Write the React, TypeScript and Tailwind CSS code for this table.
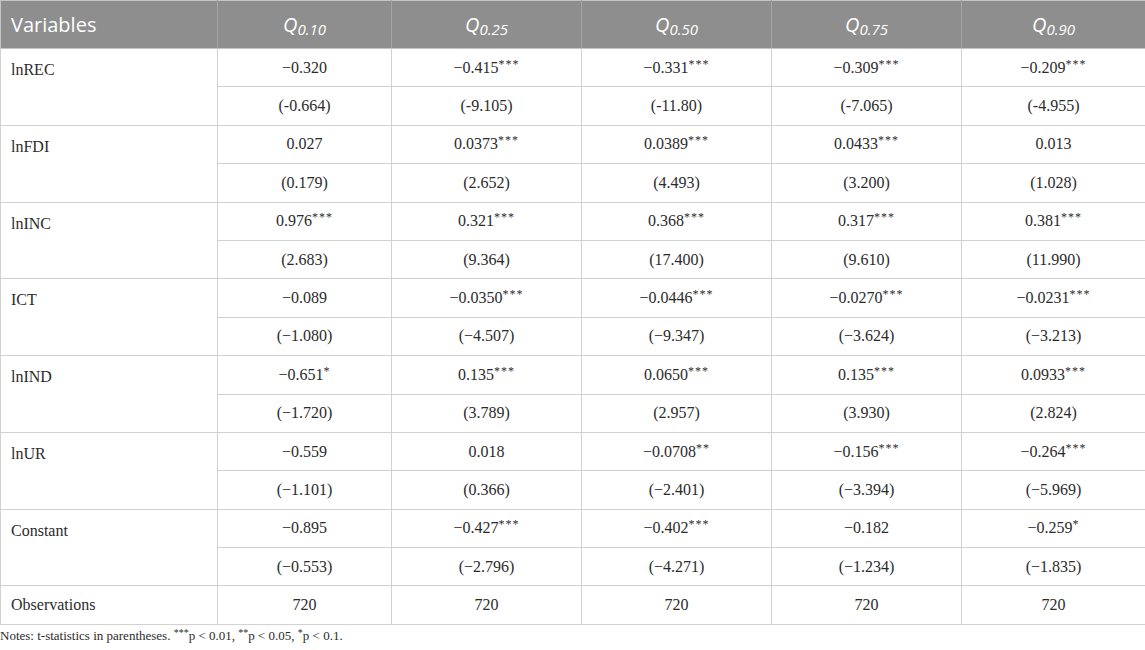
import React from 'react';

type Cell = { v: string; s?: string };

interface Row {
  name: string;
  coef: Cell[];
  tstat: string[];
}

const c = (v: string, s?: string): Cell => ({ v, s });

const rows: Row[] = [
  {
    name: 'lnREC',
    coef: [c('\u22120.320'), c('\u22120.415', '***'), c('\u22120.331', '***'), c('\u22120.309', '***'), c('\u22120.209', '***')],
    tstat: ['(-0.664)', '(-9.105)', '(-11.80)', '(-7.065)', '(-4.955)'],
  },
  {
    name: 'lnFDI',
    coef: [c('0.027'), c('0.0373', '***'), c('0.0389', '***'), c('0.0433', '***'), c('0.013')],
    tstat: ['(0.179)', '(2.652)', '(4.493)', '(3.200)', '(1.028)'],
  },
  {
    name: 'lnINC',
    coef: [c('0.976', '***'), c('0.321', '***'), c('0.368', '***'), c('0.317', '***'), c('0.381', '***')],
    tstat: ['(2.683)', '(9.364)', '(17.400)', '(9.610)', '(11.990)'],
  },
  {
    name: 'ICT',
    coef: [c('\u22120.089'), c('\u22120.0350', '***'), c('\u22120.0446', '***'), c('\u22120.0270', '***'), c('\u22120.0231', '***')],
    tstat: ['(\u22121.080)', '(\u22124.507)', '(\u22129.347)', '(\u22123.624)', '(\u22123.213)'],
  },
  {
    name: 'lnIND',
    coef: [c('\u22120.651', '*'), c('0.135', '***'), c('0.0650', '***'), c('0.135', '***'), c('0.0933', '***')],
    tstat: ['(\u22121.720)', '(3.789)', '(2.957)', '(3.930)', '(2.824)'],
  },
  {
    name: 'lnUR',
    coef: [c('\u22120.559'), c('0.018'), c('\u22120.0708', '**'), c('\u22120.156', '***'), c('\u22120.264', '***')],
    tstat: ['(\u22121.101)', '(0.366)', '(\u22122.401)', '(\u22123.394)', '(\u22125.969)'],
  },
  {
    name: 'Constant',
    coef: [c('\u22120.895'), c('\u22120.427', '***'), c('\u22120.402', '***'), c('\u22120.182'), c('\u22120.259', '*')],
    tstat: ['(\u22120.553)', '(\u22122.796)', '(\u22124.271)', '(\u22121.234)', '(\u22121.835)'],
  },
];

const quantiles = ['0.10', '0.25', '0.50', '0.75', '0.90'];

const serif = "font-['Liberation_Serif','Times_New_Roman',serif]";
const sans = "font-['Open_Sans','Noto_Sans',sans-serif]";

const td = 'border border-[#d2d2d2] h-[38.4px] p-0 align-middle text-center';

function Stars({ s, small }: { s: string; small?: boolean }) {
  return (
    <sup className={small ? 'text-[10px] relative -top-[4px]' : 'text-[12px] tracking-[1px] relative -top-[5px]'}>
      {s}
    </sup>
  );
}

export default function App() {
  return (
    <div className={`w-[1145px] h-[650px] bg-white text-[#2b2b2b] ${serif}`}>
      <table className="w-[1145px] border-collapse table-fixed text-[16px]">
        <colgroup>
          <col className="w-[217px]" />
          <col className="w-[174px]" />
          <col className="w-[190px]" />
          <col className="w-[190px]" />
          <col className="w-[190px]" />
          <col className="w-[184px]" />
        </colgroup>
        <thead>
          <tr className={`bg-[#8e8e8e] text-white h-[48px] ${sans}`}>
            <th className="text-left font-normal text-[20px] pl-[10px] border border-[#c4c4c4] border-r-[#a4a4a4]">
              Variables
            </th>
            {quantiles.map(q => (
              <th key={q} className="font-normal text-center border border-[#c4c4c4] border-l-[#a4a4a4] border-r-[#a4a4a4]">
                <span className="italic text-[20px]">Q</span>
                <sub className="italic text-[15px] relative top-[3px]">{q}</sub>
              </th>
            ))}
          </tr>
        </thead>
        <tbody>
          {rows.map(row => (
            <React.Fragment key={row.name}>
              <tr>
                <td rowSpan={2} className="border border-[#d2d2d2] align-top pl-[10px] pt-[9px] text-left">
                  {row.name}
                </td>
                {row.coef.map((cell, i) => (
                  <td key={i} className={td}>
                    {cell.v}
                    {cell.s && <Stars s={cell.s} />}
                  </td>
                ))}
              </tr>
              <tr>
                {row.tstat.map((t, i) => (
                  <td key={i} className={td}>
                    {t}
                  </td>
                ))}
              </tr>
            </React.Fragment>
          ))}
          <tr>
            <td className="border border-[#d2d2d2] h-[38.4px] pl-[10px] text-left">Observations</td>
            {quantiles.map(q => (
              <td key={q} className={td}>
                720
              </td>
            ))}
          </tr>
        </tbody>
      </table>
      <p className="text-[13px] mt-[2px] leading-[18px]">
        Notes: t-statistics in parentheses. <Stars s="***" small />p &lt; 0.01, <Stars s="**" small />p &lt; 0.05, <Stars s="*" small />p &lt; 0.1.
      </p>
    </div>
  );
}
